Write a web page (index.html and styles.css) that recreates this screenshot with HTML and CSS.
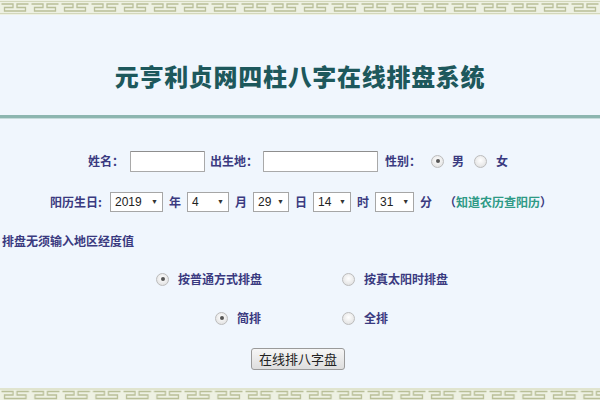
FILE: index.html
```html
<!DOCTYPE html>
<html lang="zh-CN">
<head>
<meta charset="utf-8">
<title>元亨利贞网四柱八字在线排盘系统</title>
<link rel="stylesheet" href="styles.css">
</head>
<body>
<div class="page">
  <svg class="band band-top" width="600" height="15" viewBox="0 0 600 15">
    <defs>
      <pattern id="meander" width="30" height="15" patternUnits="userSpaceOnUse">
        <rect width="30" height="15" fill="#eef1e3"/>
        <path d="M0,1.5 H30 M0,13.5 H30" stroke="#d3d7bb" stroke-width="1" fill="none"/>
        <path d="M1.5,4 H13 V7.5 H4.5 V11 H16 M28.5,4 H17 V7.5 H25.5 V11 H14" stroke="#b9bf98" stroke-width="1.3" fill="none"/>
      </pattern>
    </defs>
    <rect width="600" height="15" fill="url(#meander)"/>
  </svg>

  <header class="head">
    <h1 class="title">元亨利贞网四柱八字在线排盘系统</h1>
  </header>
  <div class="rule"></div>

  <form class="form">
    <div class="row row-1">
      <label class="lbl w-name">姓名：</label>
      <span class="input in-name"></span>
      <label class="lbl w-place">出生地：</label>
      <span class="input in-place"></span>
      <label class="lbl w-sex">性别：</label>
      <span class="radio on"></span><span class="lbl opt-m">男</span>
      <span class="radio"></span><span class="lbl opt-f">女</span>
    </div>

    <div class="row row-2">
      <span class="lbl date-lbl">阳历生日:</span>
      <span class="sel s-year"><span class="val">2019</span><span class="arr">▼</span></span>
      <span class="lbl unit">年</span>
      <span class="sel s-mon"><span class="val">4</span><span class="arr">▼</span></span>
      <span class="lbl unit">月</span>
      <span class="sel s-day"><span class="val">29</span><span class="arr">▼</span></span>
      <span class="lbl unit">日</span>
      <span class="sel s-hour"><span class="val">14</span><span class="arr">▼</span></span>
      <span class="lbl unit">时</span>
      <span class="sel s-min"><span class="val">31</span><span class="arr">▼</span></span>
      <span class="lbl unit">分</span>
      <span class="lbl link">（<a href="#">知道农历查阳历</a>）</span>
    </div>

    <div class="row row-3">
      <p class="lbl note">排盘无须输入地区经度值</p>
    </div>

    <div class="row row-4">
      <span class="opt opt-wide"><span class="radio on"></span><span class="lbl">按普通方式排盘</span></span>
      <span class="opt"><span class="radio"></span><span class="lbl">按真太阳时排盘</span></span>
    </div>

    <div class="row row-5">
      <span class="opt opt-mid"><span class="radio on"></span><span class="lbl">简排</span></span>
      <span class="opt"><span class="radio"></span><span class="lbl">全排</span></span>
    </div>

    <div class="row row-6">
      <button type="button" class="btn">在线排八字盘</button>
    </div>
  </form>

  <svg class="band band-bottom" width="600" height="12" viewBox="0 0 600 12">
    <defs>
      <pattern id="meander2" width="30.5" height="12" patternUnits="userSpaceOnUse">
        <rect width="30.5" height="12" fill="#eef1e3"/>
        <path d="M0,1 H30.5" stroke="#d3d7bb" stroke-width="1" fill="none"/>
        <path d="M1.5,3.5 H13 V7 H4.5 V10.5 H16 M29,3.5 H17 V7 H26 V10.5 H14" stroke="#b9bf98" stroke-width="1.3" fill="none"/>
      </pattern>
    </defs>
    <rect width="600" height="12" fill="url(#meander2)"/>
  </svg>
</div>
</body>
</html>
```

FILE: styles.css
```css
html, body {
  margin: 0;
  padding: 0;
}
body {
  background: #f0f6fd;
  font-family: "Noto Sans CJK SC", "Noto Sans", sans-serif;
  font-size: 12px;
  color: #34347a;
}
.page {
  width: 600px;
  height: 400px;
  overflow: hidden;
  display: flex;
  flex-direction: column;
}
.band {
  display: block;
  flex: none;
}
.head {
  height: 100px;
  box-sizing: border-box;
  padding-top: 47px;
  display: flex;
  justify-content: center;
}
.title {
  margin: 0;
  font-size: 24px;
  line-height: 28px;
  font-weight: 900;
  color: #1d585c;
  letter-spacing: 0.7px;
}
.rule {
  height: 3px;
  background: #8db6b0;
  border-bottom: 1px solid #c7dcdc;
  flex: none;
}
.form {
  padding-top: 22px;
  display: flex;
  flex-direction: column;
}
.row {
  display: flex;
  align-items: center;
  white-space: nowrap;
}
.lbl {
  line-height: 16px;
  font-weight: bold;
  color: #3a3a80;
}
.row-1 { height: 40px; padding-left: 88px; }
.row-2 { height: 41px; padding-left: 50px; }
.row-3 { height: 38px; }
.row-4 { height: 38px; padding-left: 156px; }
.row-5 { height: 40px; padding-left: 215px; }
.row-6 { height: 42px; padding-left: 251px; }

.w-name { width: 42px; }
.w-place { width: 53px; margin-left: 5px; }
.w-sex { width: 46px; margin-left: 7px; }

.input {
  display: inline-block;
  height: 19px;
  background: #fff;
  border: 1px solid #a9a9a9;
  border-top-color: #8e8e8e;
  border-radius: 1px;
}
.in-name { width: 73px; }
.in-place { width: 113px; }

.radio {
  display: inline-block;
  width: 11px;
  height: 11px;
  border-radius: 50%;
  border: 1px solid #bcbcbc;
  background: radial-gradient(circle at 50% 40%, #ffffff 0%, #e6e6e6 70%, #d5d5d5 100%);
  position: relative;
  flex: none;
}
.radio.on::after {
  content: "";
  position: absolute;
  left: 3.5px;
  top: 3.5px;
  width: 4px;
  height: 4px;
  border-radius: 50%;
  background: #555;
}
.opt-m { margin-left: 8px; margin-right: 10px; }
.opt-f { margin-left: 9px; }

.date-lbl { width: 60px; }
.sel {
  display: inline-flex;
  align-items: center;
  justify-content: space-between;
  box-sizing: border-box;
  height: 20px;
  padding: 0 4px 0 4px;
  background: #fff;
  border: 1px solid #a6a6a6;
  font-family: "Liberation Sans", Arial, sans-serif;
  font-size: 12px;
  color: #222;
}
.sel .arr {
  font-size: 7px;
  color: #333;
}
.s-year { width: 53px; }
.s-mon { width: 42px; }
.s-day { width: 36px; }
.s-hour { width: 38px; }
.s-min { width: 39px; }
.unit { margin: 0 6px 0 6px; }
.link { margin-left: 6px; }
.link a {
  color: #2e9a86;
  text-decoration: none;
}

.note {
  margin: 0;
  padding-left: 2px;
}

.opt {
  display: inline-flex;
  align-items: center;
}
.opt .lbl { margin-left: 9px; }
.opt-wide { width: 186px; }
.opt-mid { width: 127px; }

.btn {
  width: 94px;
  height: 22px;
  padding: 0;
  font-family: "Noto Sans CJK SC", sans-serif;
  font-size: 13px;
  line-height: 18px;
  color: #222;
  background: linear-gradient(#f6f6f6, #dedede);
  border: 1px solid #9a9a9a;
  border-radius: 3px;
}
.band-bottom {
  margin-top: auto;
}
```
